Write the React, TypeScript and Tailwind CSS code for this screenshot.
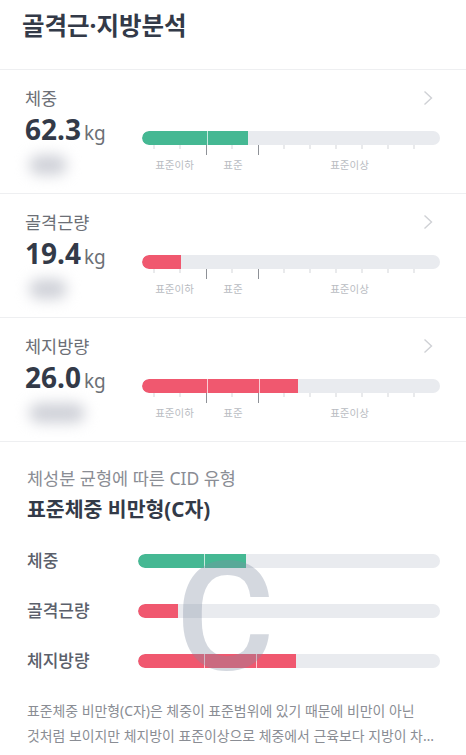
import React from 'react'

type Metric = {
  label: string
  value: string
  fill: number
  color: string
  blurWide?: boolean
}

const METRICS: Metric[] = [
  { label: '체중', value: '62.3', fill: 106, color: 'bg-[#45b893]' },
  { label: '골격근량', value: '19.4', fill: 39, color: 'bg-[#f0586f]' },
  { label: '체지방량', value: '26.0', fill: 156, color: 'bg-[#f0586f]', blurWide: true },
]

const TICKS = [12, 38, 64.5, 90, 116.5, 142, 168, 194, 220, 246, 272]

function Chevron() {
  return (
    <svg width="10" height="16" viewBox="0 0 10 16" className="mr-[7px]">
      <polyline points="1.5,1.5 8.5,8 1.5,14.5" fill="none" stroke="#cfd1d5" strokeWidth="1.4" />
    </svg>
  )
}

function Bar({ fill, color }: { fill: number; color: string }) {
  return (
    <div className="relative h-[14px] rounded-full bg-[#e9ebef] overflow-hidden">
      <div className={`h-full rounded-l-full ${color}`} style={{ width: fill }} />
      {fill > 65 && <div className="absolute top-0 left-[64.5px] h-full w-px bg-white/70" />}
      {fill > 117 && <div className="absolute top-0 left-[116.5px] h-full w-px bg-white/70" />}
    </div>
  )
}

function MetricRow({ m }: { m: Metric }) {
  return (
    <div className="h-[124px] border-b border-[#eeeff1] pl-[25px] pr-[26px] pt-[16px]">
      <div className="flex h-[24px] items-center justify-between">
        <span className="text-[17.5px] leading-[24px] text-[#6c6f76]">{m.label}</span>
        <Chevron />
      </div>
      <div className="mt-[3px] flex">
        <div className="w-[117px]">
          <div className="flex h-[32px] items-baseline">
            <span className="text-[28px] font-bold leading-[32px] text-[#333a48]">{m.value}</span>
            <span className="ml-[3px] text-[19px] leading-[32px] text-[#6c6f76]">kg</span>
          </div>
          <div className={`mt-[10px] ml-[4px] h-[20px] rounded-full bg-[#cfd1d8] blur-[7px] ${m.blurWide ? 'w-[56px]' : 'w-[38px]'}`} />
        </div>
        <div className="flex-1 pt-[18px]">
          <Bar fill={m.fill} color={m.color} />
          <svg width="298" height="10" className="block">
            {TICKS.map((x, i) => {
              const long = i === 2 || i === 4
              return (
                <line
                  key={i}
                  x1={x}
                  x2={x}
                  y1={0}
                  y2={long ? 10 : 4}
                  stroke={long ? '#8e9197' : '#d3d5d9'}
                  strokeWidth="1"
                />
              )
            })}
          </svg>
          <div className="mt-[3px] flex text-[10.5px] leading-[14px] text-[#b9bcc2]">
            <span className="w-[65px] text-center">표준이하</span>
            <span className="w-[52px] text-center">표준</span>
            <span className="flex-1 text-center">표준이상</span>
          </div>
        </div>
      </div>
    </div>
  )
}

const CID_BARS = [
  { label: '체중', fill: 108, color: 'bg-[#45b893]' },
  { label: '골격근량', fill: 40, color: 'bg-[#f0586f]' },
  { label: '체지방량', fill: 158, color: 'bg-[#f0586f]' },
]

export default function App() {
  return (
    <div
      className="min-h-screen w-[466px] bg-white"
      style={{ fontFamily: '"Noto Sans", "Noto Sans CJK KR", sans-serif' }}
    >
      <div className="h-[70px] border-b border-[#eeeff1] pl-[22px] pt-[9px]">
        <h1 className="text-[24.5px] font-bold leading-[34px] text-[#333a48]">골격근·지방분석</h1>
      </div>

      {METRICS.map((m) => (
        <MetricRow key={m.label} m={m} />
      ))}

      <div className="pl-[27px] pr-[26px] pt-[24px]">
        <div className="text-[17.5px] leading-[24px] text-[#8a8d94]">체성분 균형에 따른 CID 유형</div>
        <div className="mt-[5px] text-[20.5px] font-bold leading-[28px] text-[#333a48]">표준체중 비만형(C자)</div>

        <div className="relative mt-[12.5px]">
          {CID_BARS.map((b) => (
            <div key={b.label} className="flex h-[50px] items-center">
              <span className="w-[111px] text-[17px] font-medium text-[#5b606b]">{b.label}</span>
              <div className="flex-1">
                <div className="relative h-[14px] rounded-full bg-[#e9ebef] overflow-hidden">
                  <div className={`h-full rounded-l-full ${b.color}`} style={{ width: b.fill }} />
                  {b.fill > 67 && <div className="absolute top-0 left-[66px] h-full w-px bg-white/70" />}
                  {b.fill > 119 && <div className="absolute top-0 left-[118px] h-full w-px bg-white/70" />}
                </div>
              </div>
            </div>
          ))}
          <span
            className="pointer-events-none absolute left-[198px] top-[6px] -translate-x-1/2 text-[152px] font-medium leading-none text-[rgba(130,140,160,0.34)]"
            style={{ fontFamily: 'Roboto, "Liberation Sans", sans-serif' }}
          >
            C
          </span>
        </div>

        <div className="mt-[12.5px] text-[13.9px] leading-[25px] text-[#8a8d94]">
          <p className="whitespace-nowrap">표준체중 비만형(C자)은 체중이 표준범위에 있기 때문에 비만이 아닌</p>
          <p className="truncate">것처럼 보이지만 체지방이 표준이상으로 체중에서 근육보다 지방이 차지하는 비율이 높은 상태입니다.</p>
        </div>
      </div>
    </div>
  )
}
